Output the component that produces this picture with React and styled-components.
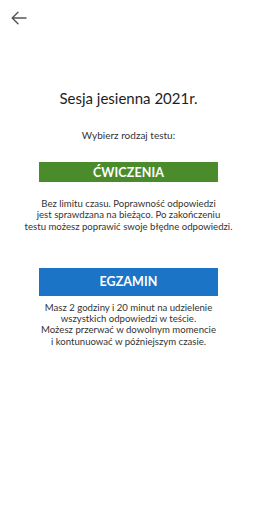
import styled, { createGlobalStyle } from "styled-components"

const Global = createGlobalStyle`
    body {
        margin: 0;
        background: #ffffff;
        font-family: Lato, "Liberation Sans", sans-serif;
    }
`

const Page = styled.div`
    width: 257px;
    height: 512px;
    display: flex;
    flex-direction: column;
    align-items: center;
`

const Header = styled.div`
    width: 100%;
    height: 36px;
    display: flex;
    align-items: center;
    padding-left: 11px;
    box-sizing: border-box;
`

const BackButton = styled.button`
    border: none;
    background: none;
    padding: 0;
    display: flex;
    cursor: pointer;
`

const Title = styled.h1`
    margin: 53px 0 0;
    font-size: 15px;
    line-height: 18px;
    font-weight: 400;
    color: #1e1e1e;
`

const Subtitle = styled.p`
    margin: 22px 0 0;
    font-size: 10px;
    line-height: 12px;
    color: #333333;
`

const Option = styled.section`
    display: flex;
    flex-direction: column;
    align-items: center;
    margin-top: ${p => p.$top}px;
`

const ModeButton = styled.button`
    width: 179px;
    height: ${p => p.$h}px;
    border: none;
    background: ${p => p.$color};
    color: #ffffff;
    font-family: Lato, "Liberation Sans", sans-serif;
    font-weight: 700;
    font-size: 12.5px;
    letter-spacing: 0.1px;
    display: flex;
    align-items: center;
    justify-content: center;
    padding: 0;
`

const Description = styled.p`
    margin: ${p => p.$gap}px 0 0;
    font-size: 9.6px;
    line-height: 11.3px;
    color: #333333;
    text-align: center;
`

export default function App() {
    return (
        <>
            <Global />
            <Page>
                <Header>
                    <BackButton aria-label="Wstecz">
                        <svg width="16" height="14" viewBox="0 0 16 14" fill="none" stroke="#555" strokeWidth="1.4" strokeLinecap="round" strokeLinejoin="round">
                            <path d="M15 7H1.5M7 1.2L1.2 7L7 12.8" />
                        </svg>
                    </BackButton>
                </Header>
                <Title>Sesja jesienna 2021r.</Title>
                <Subtitle>Wybierz rodzaj testu:</Subtitle>
                <Option $top={21}>
                    <ModeButton $color="#4a8c2b" $h={20}>ĆWICZENIA</ModeButton>
                    <Description $gap={16}>
                        Bez limitu czasu. Poprawność odpowiedzi<br />
                        jest sprawdzana na bieżąco. Po zakończeniu<br />
                        testu możesz poprawić swoje błędne odpowiedzi.
                    </Description>
                </Option>
                <Option $top={36}>
                    <ModeButton $color="#1b74c5" $h={28}>EGZAMIN</ModeButton>
                    <Description $gap={6}>
                        Masz 2 godziny i 20 minut na udzielenie<br />
                        wszystkich odpowiedzi w teście.<br />
                        Możesz przerwać w dowolnym momencie<br />
                        i kontunuować w późniejszym czasie.
                    </Description>
                </Option>
            </Page>
        </>
    )
}
